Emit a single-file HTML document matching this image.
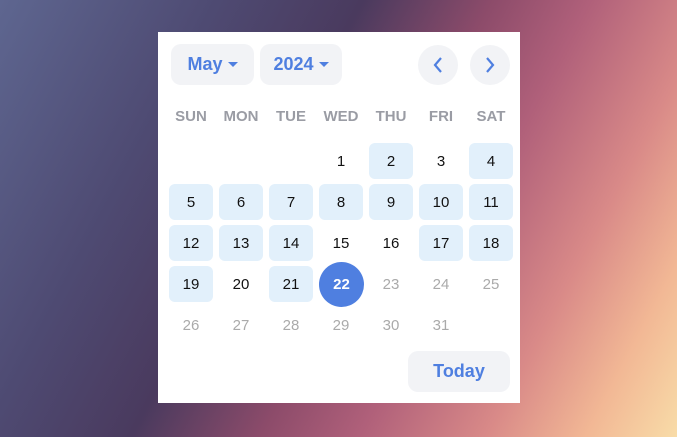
<!DOCTYPE html>
<html><head><style>
body{margin:0;width:677px;height:437px;overflow:hidden;font-family:"Liberation Sans",sans-serif;
background:linear-gradient(118deg,#5e6690 0%,#4e4a72 24%,#4a3a5e 40%,#8c4b6a 54%,#b0607a 65%,#d98a88 79%,#f2b895 90%,#f8dca8 100%);position:relative}
.p{position:absolute;left:158px;top:32px;width:362px;height:371px;background:#fff}
.b{position:absolute;background:#f2f3f6;border-radius:10px;color:#4f7fe0;font-weight:bold;font-size:18px;display:flex;align-items:center;justify-content:center}
.tri{display:inline-block;width:0;height:0;border-left:5px solid transparent;border-right:5px solid transparent;border-top:5px solid #4f7fe0;margin-left:5px}
.c{position:absolute;width:44px;height:36px;border-radius:6px;display:flex;align-items:center;justify-content:center;font-size:15px;color:#111}
.h{background:#e2f0fb}.g{color:#aaa}
.dn{position:absolute;top:76px;width:50px;text-align:center;font-weight:bold;color:#9a9ca4;font-size:15px}
</style></head><body><div class="p">
<div class="b" style="left:13px;top:12px;width:83px;height:41px">May<span class="tri"></span></div>
<div class="b" style="left:102px;top:12px;width:82px;height:41px">2024<span class="tri"></span></div>
<div class="b" style="left:260px;top:13px;width:40px;height:40px;border-radius:50%"><svg width="16" height="18" viewBox="0 0 16 18"><path d="M11 2L5 9l6 7" fill="none" stroke="#4f7fe0" stroke-width="2.2"/></svg></div>
<div class="b" style="left:312px;top:13px;width:40px;height:40px;border-radius:50%"><svg width="16" height="18" viewBox="0 0 16 18"><path d="M5 2l6 7-6 7" fill="none" stroke="#4f7fe0" stroke-width="2.2"/></svg></div>
<div class="dn" style="left:8px">SUN</div><div class="dn" style="left:58px">MON</div><div class="dn" style="left:108px">TUE</div><div class="dn" style="left:158px">WED</div><div class="dn" style="left:208px">THU</div><div class="dn" style="left:258px">FRI</div><div class="dn" style="left:308px">SAT</div>
<div id="g"></div>
<div class="b" style="left:250px;top:319px;width:102px;height:41px">Today</div>
</div>
<script>
var hl=[2,4,5,6,7,8,9,10,11,12,13,14,17,18,19,21],h='';
for(var d=1;d<=31;d++){var i=d+2,r=Math.floor(i/7),c=i%7;
var cls='c'+(hl.indexOf(d)>=0?' h':'')+(d>22?' g':'');var st='left:'+(11+c*50)+'px;top:'+(111+r*41)+'px';
if(d==22){cls='c';st+=';background:#4f7fe0;color:#fff;font-weight:bold;border-radius:50%;width:45px;height:45px;margin:-4px 0 0 0';}
h+='<div class="'+cls+'" style="'+st+'">'+d+'</div>';}
document.getElementById('g').innerHTML=h;
</script>
</body></html>
